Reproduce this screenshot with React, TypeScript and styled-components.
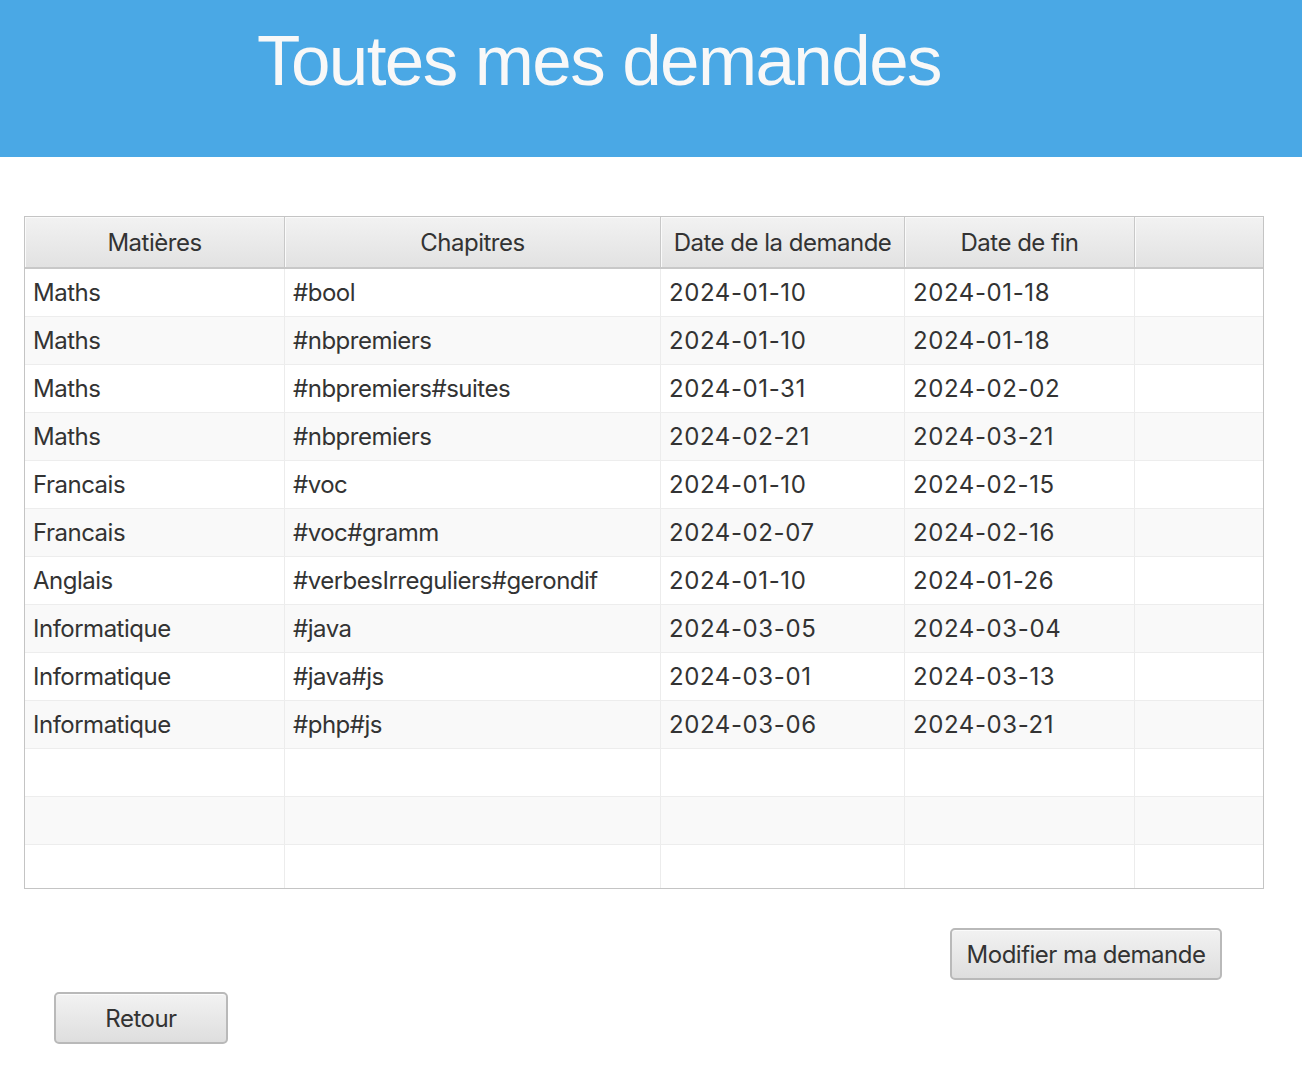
import React from "react";
import styled, { createGlobalStyle } from "styled-components";

type Demande = {
  matiere: string;
  chapitres: string;
  debut: string;
  fin: string;
};

const demandes: Demande[] = [
  { matiere: "Maths", chapitres: "#bool", debut: "2024-01-10", fin: "2024-01-18" },
  { matiere: "Maths", chapitres: "#nbpremiers", debut: "2024-01-10", fin: "2024-01-18" },
  { matiere: "Maths", chapitres: "#nbpremiers#suites", debut: "2024-01-31", fin: "2024-02-02" },
  { matiere: "Maths", chapitres: "#nbpremiers", debut: "2024-02-21", fin: "2024-03-21" },
  { matiere: "Francais", chapitres: "#voc", debut: "2024-01-10", fin: "2024-02-15" },
  { matiere: "Francais", chapitres: "#voc#gramm", debut: "2024-02-07", fin: "2024-02-16" },
  { matiere: "Anglais", chapitres: "#verbesIrreguliers#gerondif", debut: "2024-01-10", fin: "2024-01-26" },
  { matiere: "Informatique", chapitres: "#java", debut: "2024-03-05", fin: "2024-03-04" },
  { matiere: "Informatique", chapitres: "#java#js", debut: "2024-03-01", fin: "2024-03-13" },
  { matiere: "Informatique", chapitres: "#php#js", debut: "2024-03-06", fin: "2024-03-21" },
];

const EMPTY_ROWS = 3;

const GlobalStyle = createGlobalStyle`
  body {
    margin: 0;
    background: #ffffff;
    font-family: Inter, "Noto Sans", "Liberation Sans", sans-serif;
  }
`;

export default function App() {
  const blanks = Array.from({ length: EMPTY_ROWS });

  return (
    <Page>
      <GlobalStyle />
      <Banner>
        <Title>Toutes mes demandes</Title>
      </Banner>

      <Table>
        <HeaderRow>
          <HeaderCell>Matières</HeaderCell>
          <HeaderCell>Chapitres</HeaderCell>
          <HeaderCell>Date de la demande</HeaderCell>
          <HeaderCell>Date de fin</HeaderCell>
          <HeaderCell />
        </HeaderRow>
        <Body>
          {demandes.map((d, i) => (
            <Row key={`${d.matiere}_${d.chapitres}_${d.debut}`} odd={i % 2 === 1}>
              <Cell>{d.matiere}</Cell>
              <Cell>{d.chapitres}</Cell>
              <Cell numeric>{d.debut}</Cell>
              <Cell numeric>{d.fin}</Cell>
              <Cell />
            </Row>
          ))}
          {blanks.map((_, i) => (
            <Row key={`blank_${i}`} odd={(demandes.length + i) % 2 === 1}>
              <Cell />
              <Cell />
              <Cell />
              <Cell />
              <Cell />
            </Row>
          ))}
        </Body>
      </Table>

      <Footer>
        <ActionRow>
          <Button wide>Modifier ma demande</Button>
        </ActionRow>
        <BackRow>
          <Button>Retour</Button>
        </BackRow>
      </Footer>
    </Page>
  );
}

const Page = styled.div`
  width: 1302px;
  min-height: 1070px;
  display: flex;
  flex-direction: column;
`;

const Banner = styled.header`
  height: 157px;
  background-color: #4aa8e5;
  padding: 25px 0 0 257px;
  box-sizing: border-box;
`;

const Title = styled.h1`
  margin: 0;
  font-family: "Liberation Sans", Arial, sans-serif;
  font-weight: normal;
  font-size: 71px;
  line-height: 1;
  letter-spacing: -1.6px;
  color: #f8f8f8;
`;

const Table = styled.div`
  margin: 59px 0 0 24px;
  width: 1240px;
  border: 1px solid #c4c4c4;
  box-sizing: border-box;
  display: flex;
  flex-direction: column;
  background: #ffffff;
`;

const columns = "260px 376px 244px 230px 1fr";

const HeaderRow = styled.div`
  display: grid;
  grid-template-columns: ${columns};
  height: 52px;
  border-bottom: 2px solid #c8c8c8;
  box-sizing: border-box;
`;

const HeaderCell = styled.div`
  display: flex;
  align-items: center;
  justify-content: center;
  background: linear-gradient(#f2f2f2, #e2e2e2);
  border-right: 1px solid #c8c8c8;
  box-shadow: inset 1px 1px 0 #fafafa;
  font-size: 24px;
  letter-spacing: -0.5px;
  color: #333333;

  &:last-child {
    border-right: none;
  }
`;

const Body = styled.div`
  height: 619px;
  overflow: hidden;
`;

const Row = styled.div<{ odd?: boolean }>`
  display: grid;
  grid-template-columns: ${columns};
  height: 48px;
  border-bottom: 1px solid #ededed;
  box-sizing: border-box;
  background-color: ${(p) => (p.odd ? "#f9f9f9" : "#ffffff")};
`;

const Cell = styled.div<{ numeric?: boolean }>`
  display: flex;
  align-items: center;
  padding: 0 8px;
  border-right: 1px solid #ececec;
  font-size: 24px;
  letter-spacing: ${(p) => (p.numeric ? "0.6px" : "-0.5px")};
  color: #333333;
  white-space: nowrap;
  overflow: hidden;

  &:last-child {
    border-right: none;
  }
`;

const Footer = styled.div`
  display: flex;
  flex-direction: column;
  gap: 12px;
  margin-top: 39px;
`;

const ActionRow = styled.div`
  display: flex;
  justify-content: flex-end;
  padding-right: 80px;
`;

const BackRow = styled.div`
  display: flex;
  padding-left: 54px;
`;

const Button = styled.button<{ wide?: boolean }>`
  width: ${(p) => (p.wide ? "272px" : "174px")};
  height: 52px;
  border: 2px solid #b9b9b9;
  border-radius: 5px;
  background: linear-gradient(#f2f2f2, #dedede);
  box-shadow: inset 0 1px 0 #fbfbfb;
  font-family: Inter, "Noto Sans", "Liberation Sans", sans-serif;
  font-size: 24px;
  letter-spacing: -0.5px;
  color: #333333;
  padding: 0;
  cursor: pointer;
`;
